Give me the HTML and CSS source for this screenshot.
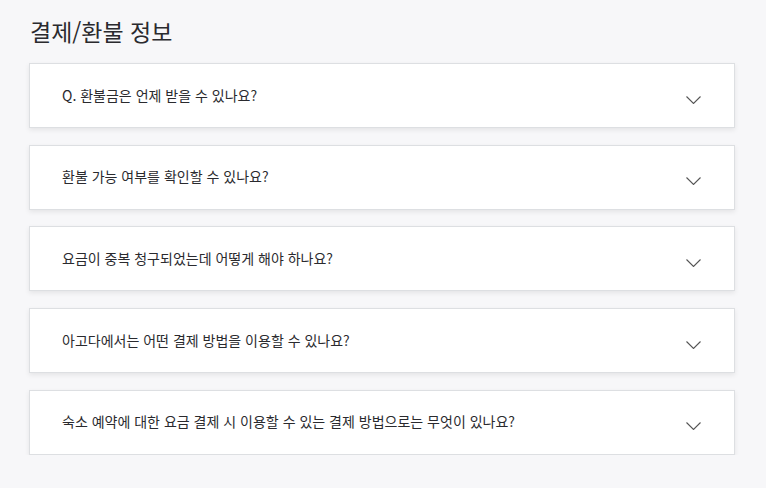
FILE: index.html
```html
<!DOCTYPE html>
<html lang="ko">
<head>
    <meta charset="UTF-8">
    <title>결제/환불 정보</title>
    <link rel="stylesheet" href="styles.css">
</head>
<body>
<div class="wrap">
    <h2 class="title">결제/환불 정보</h2>
    <ul class="faq">
        <li class="faq-item"><span>Q. 환불금은 언제 받을 수 있나요?</span><svg class="arrow" width="15" height="8" viewBox="0 0 15 8"><polyline points="0.5,0.5 7.5,7.5 14.5,0.5"/></svg></li>
        <li class="faq-item"><span>환불 가능 여부를 확인할 수 있나요?</span><svg class="arrow" width="15" height="8" viewBox="0 0 15 8"><polyline points="0.5,0.5 7.5,7.5 14.5,0.5"/></svg></li>
        <li class="faq-item"><span>요금이 중복 청구되었는데 어떻게 해야 하나요?</span><svg class="arrow" width="15" height="8" viewBox="0 0 15 8"><polyline points="0.5,0.5 7.5,7.5 14.5,0.5"/></svg></li>
        <li class="faq-item"><span>아고다에서는 어떤 결제 방법을 이용할 수 있나요?</span><svg class="arrow" width="15" height="8" viewBox="0 0 15 8"><polyline points="0.5,0.5 7.5,7.5 14.5,0.5"/></svg></li>
        <li class="faq-item"><span>숙소 예약에 대한 요금 결제 시 이용할 수 있는 결제 방법으로는 무엇이 있나요?</span><svg class="arrow" width="15" height="8" viewBox="0 0 15 8"><polyline points="0.5,0.5 7.5,7.5 14.5,0.5"/></svg></li>
    </ul>
</div>
</body>
</html>
```

FILE: styles.css
```css
/* 전체 배경 */
html, body {
    margin: 0;
    padding: 0;
    background: #f7f7f9;
    font-family: "Noto Sans CJK KR", "Noto Sans", sans-serif;
    color: #2a2a2e;
}
.wrap {
    padding: 14px 0 0 29px;
    width: 706px;
}
/* 제목 */
.title {
    margin: 0 0 15px 1px;
    font-size: 23px;
    font-weight: 400;
    line-height: 34px;
    color: #2a2a2e;
}
.faq {
    margin: 0;
    padding: 0;
    list-style: none;
    display: flex;
    flex-direction: column;
    gap: 16.7px;
}
/* 질문 카드 */
.faq-item {
    display: flex;
    align-items: center;
    justify-content: space-between;
    height: 63px;
    padding: 0 33px 0 32px;
    background: #fff;
    border: 1px solid #dddfe2;
    box-shadow: 0 2px 5px rgba(0, 0, 0, 0.08);
    font-size: 14px;
}
.faq-item span {
    position: relative;
    top: -1px;
}
/* 화살표 */
.arrow {
    margin-top: 8px;
    fill: none;
    stroke: #555;
    stroke-width: 1.1;
}
```
